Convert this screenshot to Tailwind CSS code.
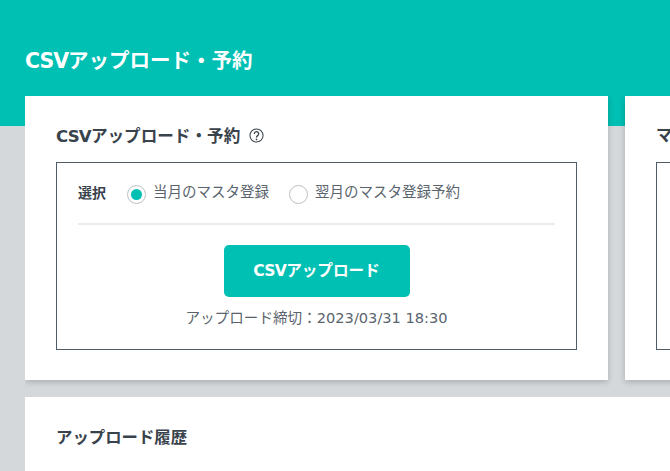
<!DOCTYPE html>
<html lang="ja">

<head>
    <meta charset="UTF-8">
    <meta name="viewport" content="width=device-width, initial-scale=1.0">
    <title>CSVアップロード・予約</title>
    <script src="https://cdn.jsdelivr.net/npm/@tailwindcss/browser@4"></script>
</head>

<body class="h-[471px] overflow-hidden bg-[#d5d8db] font-['DejaVu_Sans','Noto_Sans_CJK_JP',sans-serif] text-[#39434c]">
    <!-- ヘッダー -->
    <header class="h-[126px] bg-[#00bfb3] px-[25px] pt-[46px]">
        <h1 class="text-[20.5px] leading-[30px] font-bold text-white"><span class="tracking-[-1px]">CSV</span>アップロード・予約</h1>
    </header>

    <main class="-mt-[30px] pl-[25px]">
        <div class="flex w-[645px] gap-[17px] overflow-hidden pb-[17px]">
            <!-- アップロードカード -->
            <section class="h-[284px] w-[583px] shrink-0 bg-white px-[31px] pt-[28px] shadow-[0_2px_6px_rgba(0,0,0,0.2)]">
                <div class="flex h-[24px] items-center gap-[9px]">
                    <h2 class="mt-[2px] text-[16.6px] leading-[24px] font-bold"><span class="tracking-[-0.8px]">CSV</span>アップロード・予約</h2>
                    <svg width="15" height="15" viewBox="0 0 16 16" fill="none" class="-mt-[1px]">
                        <circle cx="8" cy="8" r="7" stroke="#39434c" stroke-width="1.1" />
                        <path d="M5.7 6.3a2.3 2.3 0 1 1 3.6 1.8c-.9.6-1.3 1-1.3 1.9" stroke="#39434c" stroke-width="1.4" />
                        <circle cx="8" cy="12.2" r=".9" fill="#39434c" />
                    </svg>
                </div>

                <div class="mt-[14px] h-[188px] border border-[#4f5d69] px-[21px]">
                    <div class="flex h-[62px] items-center border-b-2 border-[#e9ebec] pt-[2px]">
                        <span class="mr-[21px] mb-[2px] text-[14px] font-bold">選択</span>
                        <label class="mr-[20px] flex items-center gap-[7px]">
                            <span class="flex size-[19px] items-center justify-center rounded-full border border-[#bcc2c7]">
                                <span class="size-[11px] rounded-full bg-[#00bfb3]"></span>
                            </span>
                            <span class="mb-[2px] text-[14.5px] text-[#5a646d]">当月のマスタ登録</span>
                        </label>
                        <label class="flex items-center gap-[7px]">
                            <span class="size-[19px] rounded-full border border-[#bcc2c7]"></span>
                            <span class="mb-[2px] text-[14.5px] text-[#5a646d]">翌月のマスタ登録予約</span>
                        </label>
                    </div>

                    <div class="flex flex-col items-center pt-[20px]">
                        <button class="h-[52px] w-[186px] rounded-[5px] bg-[#00bfb3] pt-[2px] text-[15.6px] font-bold text-white"><span class="tracking-[-0.7px]">CSV</span>アップロード</button>
                        <p class="mt-[10px] text-[14.6px] leading-[21px] text-[#5a646d]">アップロード締切：2023/03/31 18:30</p>
                    </div>
                </div>
            </section>

            <!-- 右側のカード -->
            <section class="h-[284px] w-[400px] shrink-0 bg-white pt-[28px] pl-[31px] shadow-[0_2px_6px_rgba(0,0,0,0.2)]">
                <h2 class="h-[24px] text-[16.6px] leading-[24px] font-bold">マ</h2>
                <div class="mt-[14px] h-[188px] border border-[#4f5d69]"></div>
            </section>
        </div>

        <!-- アップロード履歴 -->
        <section class="h-[200px] bg-white px-[31px] pt-[29px]">
            <h2 class="text-[16.4px] leading-[24px] font-bold">アップロード履歴</h2>
        </section>
    </main>
</body>

</html>
